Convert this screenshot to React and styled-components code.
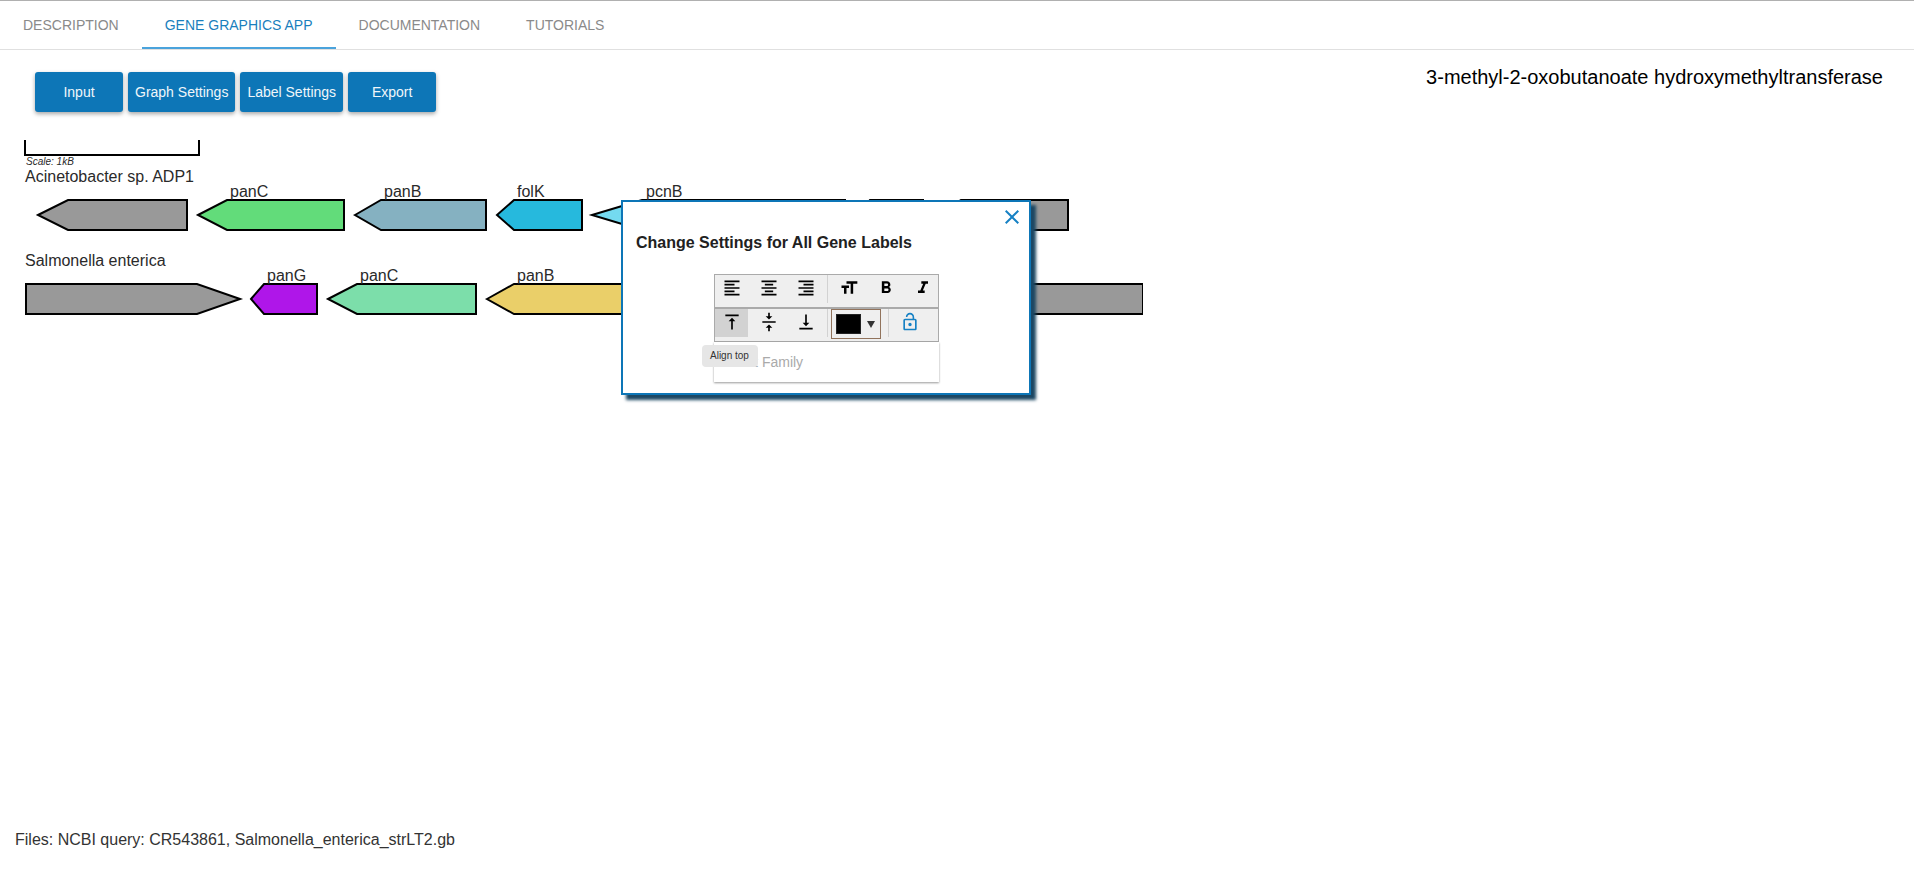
import React from "react";
import styled, { createGlobalStyle } from "styled-components";
import {
  MdClose,
  MdFormatAlignCenter,
  MdFormatAlignLeft,
  MdFormatAlignRight,
  MdFormatBold,
  MdFormatItalic,
  MdFormatSize,
  MdLockOpen,
  MdVerticalAlignBottom,
  MdVerticalAlignCenter,
  MdVerticalAlignTop,
} from "react-icons/md";

const blue = "#0d76b7";

const GlobalStyle = createGlobalStyle`
  *, *::before, *::after { box-sizing: border-box; }
  body {
    margin: 0;
    background: #fff;
    color: #212121;
    font-family: "Liberation Sans", Arial, sans-serif;
    font-size: 16px;
  }
  button, input { font-family: inherit; }
`;

const Page = styled.div`
  display: flex;
  flex-direction: column;
  min-height: 100vh;
`;

const Tabs = styled.nav`
  display: flex;
  height: 50px;
  border-top: 1px solid #b0b0b0;
  border-bottom: 1px solid #e0e0e0;
`;

const Tab = styled.a`
  padding: 0 23px;
  border-bottom: 2px solid ${(p) => (p.$active ? "#4aa3dc" : "transparent")};
  color: ${(p) => (p.$active ? "#1a7fbd" : "#8a8a8a")};
  font-size: 14px;
  line-height: 48px;
  text-decoration: none;
  text-transform: uppercase;
`;

const Header = styled.header`
  display: flex;
  justify-content: space-between;
  align-items: flex-start;
  padding: 16px 31px 28px 35px;
`;

const Actions = styled.div`
  display: flex;
  gap: 5px;
  padding-top: 6px;
`;

const ActionButton = styled.button`
  min-width: 88px;
  height: 40px;
  padding: 0 7px;
  border: 0;
  border-radius: 3px;
  background: ${blue};
  box-shadow: 0 2px 4px rgba(0, 0, 0, 0.35);
  color: #f0f6fa;
  font-size: 14px;
  font-weight: 500;
`;

const ProductName = styled.h1`
  margin: 0;
  color: #000;
  font-size: 20px;
  font-weight: 400;
  line-height: 22px;
`;

const Workspace = styled.main`
  position: relative;
  flex: 1;
`;

const Chart = styled.svg`
  display: block;

  .gene { stroke: #000; stroke-width: 2; }
  .scale { fill: none; stroke: #000; stroke-width: 2; }
  text { fill: #2a2a2a; font-size: 16px; }
  .scale-label { font-size: 10px; font-style: italic; }
`;

const Dialog = styled.section`
  position: absolute;
  top: 60px;
  left: 621px;
  width: 410px;
  padding: 32px 13px 11px;
  border: 2px solid ${blue};
  background: #fff;
  box-shadow: 5px 5px 3px #1c4763;
`;

const CloseButton = styled.button`
  position: absolute;
  top: 3px;
  right: 5px;
  display: flex;
  padding: 0;
  border: 0;
  background: none;
  color: #1681c4;
`;

const DialogTitle = styled.h2`
  margin: 0 0 22px;
  font-size: 16px;
  line-height: 18px;
`;

const Controls = styled.div`
  position: relative;
  width: 225px;
  margin-left: 78px;
`;

const ToolRow = styled.div`
  display: flex;
  align-items: flex-start;
  gap: 4px;
  height: 34px;
  border: 1px solid #aaa;
  background: #efefef;
`;

const ToolButton = styled.button`
  display: flex;
  flex: none;
  align-items: center;
  justify-content: center;
  width: 33px;
  height: 28px;
  padding: 0 0 2px;
  border: 0;
  background: ${(p) => (p.$active ? "#d2d2d2" : "transparent")};
  color: ${(p) => (p.$accent ? "#1681c4" : "#000")};
  font-size: 20px;
`;

const Separator = styled.span`
  flex: none;
  width: 1px;
  height: 28px;
  margin-left: 1px;
  background: #d2d2d2;
`;

const ColorPicker = styled.button`
  display: flex;
  flex: none;
  align-items: center;
  gap: 6px;
  width: 50px;
  height: 30px;
  margin: 0 2px 0 -1px;
  padding: 0 4px;
  border: 1px solid #91735c;
  background: #efefef;
`;

const Swatch = styled.span`
  width: 25px;
  height: 20px;
  border: 1px solid #222;
  background: #000;
`;

const Caret = styled.span`
  border: solid transparent;
  border-width: 7px 4px 0;
  border-top-color: #333;
`;

const FontInput = styled.input`
  display: block;
  width: 100%;
  height: 40px;
  padding: 0 16px;
  border: 0;
  background: #fff;
  box-shadow: 0 1px 2px rgba(0, 0, 0, 0.4);
  font-size: 14px;

  &::placeholder { color: #aaa; opacity: 1; }
`;

const Tooltip = styled.span`
  position: absolute;
  top: 71px;
  left: -12px;
  padding: 0 9px 0 8px;
  border-radius: 4px;
  background: #e6e6e6;
  color: #333;
  font-size: 10px;
  line-height: 22px;
`;

const Footer = styled.footer`
  padding: 0 15px 45px;
  color: #333;
  line-height: 20px;
`;

const tabs = ["Description", "Gene Graphics App", "Documentation", "Tutorials"];
const actions = ["Input", "Graph Settings", "Label Settings", "Export"];

// tip: point of the arrow, neck: where the head meets the body, end: flat side
const genomes = [
  {
    name: "Acinetobacter sp. ADP1",
    nameY: 42,
    top: 60,
    genes: [
      { tip: 38, neck: 68, end: 187, fill: "#999" },
      { tip: 198, neck: 227, end: 344, fill: "#62dc7a", label: "panC", labelX: 230 },
      { tip: 355, neck: 381, end: 486, fill: "#85b1c1", label: "panB", labelX: 384 },
      { tip: 497, neck: 514, end: 582, fill: "#26b9dd", label: "folK", labelX: 517 },
      { tip: 592, neck: 642, end: 845, fill: "#74daf0", label: "pcnB", labelX: 646 },
      { tip: 857, neck: 870, end: 923, fill: "#999" },
      { tip: 935, neck: 961, end: 1068, fill: "#999" },
    ],
  },
  {
    name: "Salmonella enterica",
    nameY: 126,
    top: 144,
    genes: [
      { tip: 240, neck: 197, end: 26, fill: "#999" },
      { tip: 251, neck: 264, end: 317, fill: "#af16e9", label: "panG", labelX: 267 },
      { tip: 328, neck: 357, end: 476, fill: "#7cdeaa", label: "panC", labelX: 360 },
      { tip: 487, neck: 514, end: 630, fill: "#eacf69", label: "panB", labelX: 517 },
      { tip: 960, neck: 990, end: 1143, fill: "#999" },
    ],
  },
];

function Gene({ gene, top }) {
  const { tip, neck, end, fill, label, labelX } = gene;
  return (
    <g>
      <polygon
        className="gene"
        fill={fill}
        points={`${tip},${top + 15} ${neck},${top} ${end},${top} ${end},${top + 30} ${neck},${top + 30}`}
      />
      {label && <text x={labelX} y={top - 3}>{label}</text>}
    </g>
  );
}

function Tool({ icon: Icon, label, active, accent }) {
  return (
    <ToolButton type="button" aria-label={label} $active={active} $accent={accent}>
      <Icon />
    </ToolButton>
  );
}

export default function App() {
  return (
    <>
      <GlobalStyle />
      <Page>
        <Tabs>
          {tabs.map((t) => (
            <Tab key={t} href="#" $active={t === "Gene Graphics App"}>{t}</Tab>
          ))}
        </Tabs>
        <Header>
          <Actions>
            {actions.map((a) => (
              <ActionButton key={a} type="button">{a}</ActionButton>
            ))}
          </Actions>
          <ProductName>3-methyl-2-oxobutanoate hydroxymethyltransferase</ProductName>
        </Header>
        <Workspace>
          <Chart width="1143" height="180">
            <path className="scale" d="M25 0V15H199V0" />
            <text className="scale-label" x="26" y="25">Scale: 1kB</text>
            {genomes.map((g) => (
              <g key={g.name}>
                <text x="25" y={g.nameY}>{g.name}</text>
                {g.genes.map((gene) => (
                  <Gene key={gene.tip} gene={gene} top={g.top} />
                ))}
              </g>
            ))}
          </Chart>
          <Dialog role="dialog" aria-labelledby="dialog-title">
            <CloseButton type="button" aria-label="Close"><MdClose size={24} /></CloseButton>
            <DialogTitle id="dialog-title">Change Settings for All Gene Labels</DialogTitle>
            <Controls>
              <ToolRow>
                <Tool icon={MdFormatAlignLeft} label="Align left" />
                <Tool icon={MdFormatAlignCenter} label="Align center" />
                <Tool icon={MdFormatAlignRight} label="Align right" />
                <Separator />
                <Tool icon={MdFormatSize} label="Font size" />
                <Tool icon={MdFormatBold} label="Bold" />
                <Tool icon={MdFormatItalic} label="Italic" />
              </ToolRow>
              <ToolRow>
                <Tool icon={MdVerticalAlignTop} label="Align top" active />
                <Tool icon={MdVerticalAlignCenter} label="Align middle" />
                <Tool icon={MdVerticalAlignBottom} label="Align bottom" />
                <Separator />
                <ColorPicker type="button" aria-label="Label color">
                  <Swatch />
                  <Caret />
                </ColorPicker>
                <Separator />
                <Tool icon={MdLockOpen} label="Unlock position" accent />
              </ToolRow>
              <FontInput type="text" placeholder="Font Family" aria-label="Font Family" />
              <Tooltip role="tooltip">Align top</Tooltip>
            </Controls>
          </Dialog>
        </Workspace>
        <Footer>Files: NCBI query: CR543861, Salmonella_enterica_strLT2.gb</Footer>
      </Page>
    </>
  );
}
